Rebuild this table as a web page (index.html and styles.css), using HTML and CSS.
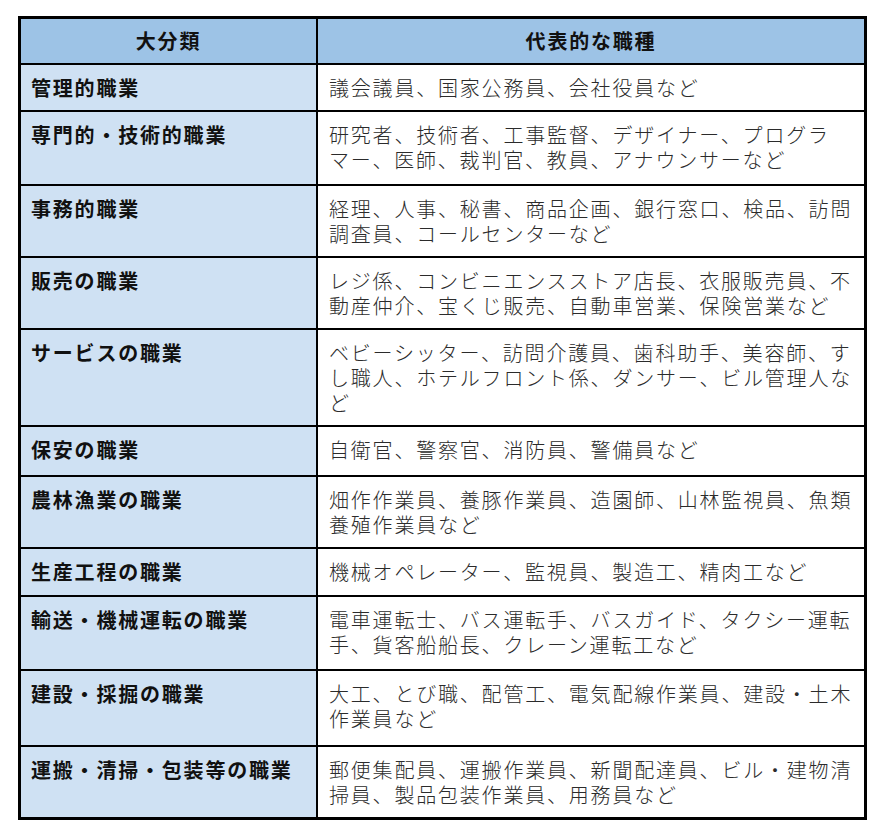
FILE: index.html
```html
<!DOCTYPE html>
<html lang="ja">
<head>
<meta charset="utf-8">
<link rel="stylesheet" href="styles.css">
</head>
<body>
<table class="jobs">
  <thead>
    <tr class="h46"><th class="cat">大分類</th><th class="ex">代表的な職種</th></tr>
  </thead>
  <tbody>
    <tr class="h47"><td class="cat">管理的職業</td><td class="ex">議会議員、国家公務員、会社役員など</td></tr>
    <tr class="h74"><td class="cat">専門的・技術的職業</td><td class="ex">研究者、技術者、工事監督、デザイナー、プログラマー、医師、裁判官、教員、アナウンサーなど</td></tr>
    <tr class="h72"><td class="cat">事務的職業</td><td class="ex">経理、人事、秘書、商品企画、銀行窓口、検品、訪問調査員、コールセンターなど</td></tr>
    <tr class="h72"><td class="cat">販売の職業</td><td class="ex">レジ係、コンビニエンスストア店長、衣服販売員、不動産仲介、宝くじ販売、自動車営業、保険営業など</td></tr>
    <tr class="h97"><td class="cat">サービスの職業</td><td class="ex">ベビーシッター、訪問介護員、歯科助手、美容師、すし職人、ホテルフロント係、ダンサー、ビル管理人など</td></tr>
    <tr class="h50"><td class="cat">保安の職業</td><td class="ex">自衛官、警察官、消防員、警備員など</td></tr>
    <tr class="h72"><td class="cat">農林漁業の職業</td><td class="ex">畑作作業員、養豚作業員、造園師、山林監視員、魚類養殖作業員など</td></tr>
    <tr class="h48"><td class="cat">生産工程の職業</td><td class="ex">機械オペレーター、監視員、製造工、精肉工など</td></tr>
    <tr class="h74"><td class="cat">輸送・機械運転の職業</td><td class="ex">電車運転士、バス運転手、バスガイド、タクシー運転手、貨客船船長、クレーン運転工など</td></tr>
    <tr class="h76"><td class="cat">建設・採掘の職業</td><td class="ex">大工、とび職、配管工、電気配線作業員、建設・土木作業員など</td></tr>
    <tr class="h72"><td class="cat">運搬・清掃・包装等の職業</td><td class="ex">郵便集配員、運搬作業員、新聞配達員、ビル・建物清掃員、製品包装作業員、用務員など</td></tr>
  </tbody>
</table>
</body>
</html>
```
FILE: styles.css
```css
html, body {
  margin: 0;
  padding: 0;
  background: #ffffff;
}
body {
  padding: 16px 0 0 18px;
  font-family: "Noto Sans CJK JP", "Noto Sans", sans-serif;
}
.jobs {
  border-collapse: collapse;
  width: 849px;
  table-layout: fixed;
  border: 3px solid #000;
}
.jobs th, .jobs td {
  border: 2px solid #000;
  font-size: 20px;
  line-height: 25px;
  letter-spacing: 1.8px;
  vertical-align: top;
  text-align: left;
  line-break: strict;
}
.jobs th {
  background: #9dc3e6;
  color: #111;
  font-weight: bold;
  text-align: center;
  vertical-align: middle;
  padding: 0;
}
.jobs th.cat { width: 295px; }
.jobs td.cat {
  background: #cfe1f3;
  color: #111;
  font-weight: bold;
  padding: 10px 4px 10px 10px;
}
.jobs td.ex {
  background: #ffffff;
  color: #2b2b2b;
  font-weight: 300;
  padding: 10px 3px 10px 11px;
}
.h46 { height: 46px; }
.h47 { height: 47px; }
.h48 { height: 48px; }
.h50 { height: 50px; }
.h72 { height: 72px; }
.h74 { height: 74px; }
.h76 { height: 76px; }
.h97 { height: 97px; }
```
